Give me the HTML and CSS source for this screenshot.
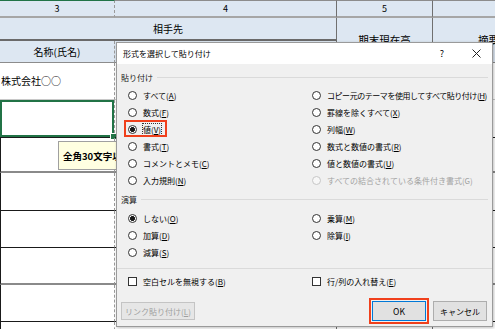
FILE: index.html
```html
<!DOCTYPE html>
<html lang="ja">
<head>
<meta charset="utf-8">
<title>形式を選択して貼り付け</title>
<link rel="stylesheet" href="styles.css">
</head>
<body>
<div class="sheet">
  <div class="c h1 hsel dash">3</div>
  <div class="c h1 dark">4</div>
  <div class="c h1 dark">5</div>
  <div class="c h1">6</div>

  <div class="c hd p-aite r2 dark">相手先</div>
  <div class="c hd p-kimatsu dark tall">期末現在高</div>
  <div class="c hd p-tekiyo tall">摘要</div>
  <div class="c hd p-name r3 dash">名称(氏名)</div>
  <div class="c hd p-addr r3 dark">所在地(住所)</div>

  <div class="c left dash">株式会社○○</div>
  <div class="c dark"></div>
  <div class="c dark"></div>
  <div class="c"></div>

  <div class="c sel dash bk"></div>
  <div class="c dark bk"></div>
  <div class="c dark bk"></div>
  <div class="c bk"></div>

  <div class="c dash gr lb"></div>
  <div class="c dark gr"></div>
  <div class="c dark gr"></div>
  <div class="c gr"></div>

  <div class="c dash bk lb"></div>
  <div class="c dark bk"></div>
  <div class="c dark bk"></div>
  <div class="c bk"></div>

  <div class="c dash bk lb"></div>
  <div class="c dark bk"></div>
  <div class="c dark bk"></div>
  <div class="c bk"></div>

  <div class="c dash gr lb"></div>
  <div class="c dark gr"></div>
  <div class="c dark gr"></div>
  <div class="c gr"></div>

  <div class="c dash bk lb"></div>
  <div class="c dark bk"></div>
  <div class="c dark bk"></div>
  <div class="c bk"></div>

  <div class="c dash lb"></div>
  <div class="c dark"></div>
  <div class="c dark"></div>
  <div class="c"></div>
</div>

<div class="tip"><span>全角30文字以内で入力してください</span></div>

<div class="dlg">
  <div class="title">
    <span class="ttext">形式を選択して貼り付け</span>
    <span class="help">?</span>
    <svg class="close" width="9" height="9" viewBox="0 0 9 9"><path d="M0.5 0.5 L8.5 8.5 M8.5 0.5 L0.5 8.5" stroke="#222" stroke-width="1" fill="none"/></svg>
  </div>
  <div class="body">
    <div class="grp">貼り付け</div>
    <div class="opts six">
      <div class="opt"><span class="rd"></span><span>すべて(<u>A</u>)</span></div>
      <div class="opt tight"><span class="rd"></span><span>コピー元のテーマを使用してすべて貼り付け(<u>H</u>)</span></div>
      <div class="opt"><span class="rd"></span><span>数式(<u>F</u>)</span></div>
      <div class="opt"><span class="rd"></span><span>罫線を除くすべて(<u>X</u>)</span></div>
      <div class="opt hl"><span class="rd on"></span><span class="focus">値(<u>V</u>)</span></div>
      <div class="opt"><span class="rd"></span><span>列幅(<u>W</u>)</span></div>
      <div class="opt"><span class="rd"></span><span>書式(<u>T</u>)</span></div>
      <div class="opt"><span class="rd"></span><span>数式と数値の書式(<u>R</u>)</span></div>
      <div class="opt"><span class="rd"></span><span>コメントとメモ(<u>C</u>)</span></div>
      <div class="opt"><span class="rd"></span><span>値と数値の書式(<u>U</u>)</span></div>
      <div class="opt"><span class="rd"></span><span>入力規則(<u>N</u>)</span></div>
      <div class="opt off"><span class="rd"></span><span>すべての結合されている条件付き書式(G)</span></div>
    </div>
    <div class="grp g2">演算</div>
    <div class="opts three">
      <div class="opt"><span class="rd on"></span><span>しない(<u>O</u>)</span></div>
      <div class="opt"><span class="rd"></span><span>乗算(<u>M</u>)</span></div>
      <div class="opt"><span class="rd"></span><span>加算(<u>D</u>)</span></div>
      <div class="opt"><span class="rd"></span><span>除算(<u>I</u>)</span></div>
      <div class="opt"><span class="rd"></span><span>減算(<u>S</u>)</span></div>
    </div>
    <div class="sep"></div>
    <div class="opts checks">
      <div class="opt"><span class="cb"></span><span>空白セルを無視する(<u>B</u>)</span></div>
      <div class="opt"><span class="cb"></span><span>行/列の入れ替え(<u>E</u>)</span></div>
    </div>
    <div class="btns">
      <span class="btn link">リンク貼り付け(<u>L</u>)</span>
      <span class="btn ok">OK</span>
      <span class="btn cancel">キャンセル</span>
    </div>
  </div>
</div>
</body>
</html>
```

FILE: styles.css
```css
html, body {
  margin: 0;
  padding: 0;
}
body {
  width: 495px;
  height: 329px;
  overflow: hidden;
  position: relative;
  background: #fff;
  font-family: "Noto Sans CJK JP", "Noto Sans", sans-serif;
}

/* ---------- spreadsheet ---------- */
.sheet {
  display: grid;
  grid-template-columns: 115px 222px 96px 130px;
  grid-template-rows: 18px 23px 22px 37px 38px 35px 38px 37px 37px 37px 30px;
}
.c {
  box-sizing: border-box;
  border-right: 1px solid #c8c8c8;
  border-bottom: 1px solid #c8c8c8;
  font-size: 10px;
  line-height: 1;
  display: flex;
  align-items: center;
  justify-content: center;
  color: #000;
  position: relative;
}
.c.dash { border-right: 1px dashed #9a9a9a; }
.c.dark { border-right: 1px solid #707070; }
.h1 {
  background: #dde7f2;
  border-top: 1px solid #8c8c8c;
  border-bottom: 2px solid #a6a6a6;
  font-size: 9px;
}
.h1.hsel { border-top-color: #217346; }
.hd { background: #dde7f2; }
.p-aite { grid-column: 1 / 3; grid-row: 2; }
.p-kimatsu { grid-column: 3; grid-row: 2 / 4; }
.p-tekiyo { grid-column: 4; grid-row: 2 / 4; justify-content: flex-start; padding-left: 45px; }
.p-name { grid-column: 1; grid-row: 3; }
.p-addr { grid-column: 2; grid-row: 3; }
.r2 { border-bottom: 2px solid #6a6a6a; }
.r3 { border-bottom: 1px solid #8c8c8c; }
.tall { border-bottom: 1px solid #8c8c8c; font-size: 10.5px; }
.left { justify-content: flex-start; padding-left: 1px; }
.sel { box-shadow: inset 0 0 0 2px #217346; }
.sel::after {
  content: "";
  position: absolute;
  right: -3px;
  bottom: -3px;
  width: 5px;
  height: 5px;
  background: #217346;
  border: 1px solid #fff;
}
.bk { border-bottom: 1px solid #1a1a1a; }
.gr { border-bottom: 2px solid #8a8a8a; }
.lb { border-left: 1px solid #1a1a1a; }

/* tooltip */
.tip {
  position: absolute;
  left: 58px;
  top: 141px;
  width: 60px;
  height: 29px;
  box-sizing: border-box;
  background: #ffffe1;
  border: 1px solid #a0a0a0;
  font-size: 9.5px;
  font-weight: bold;
  padding-left: 4px;
  display: flex;
  align-items: center;
  white-space: nowrap;
  overflow: hidden;
}

/* ---------- dialog ---------- */
.dlg {
  position: absolute;
  left: 116px;
  top: 42px;
  width: 377px;
  height: 285px;
  box-sizing: border-box;
  border: 1px solid #9a9a9a;
  background: #f0f0f0;
  box-shadow: 1px 1px 3px rgba(0,0,0,0.25);
  font-size: 8px;
  color: #000;
}
.title {
  height: 21px;
  background: #fff;
  display: flex;
  align-items: center;
  padding-left: 6px;
  padding-right: 11px;
}
.ttext { flex: 1; }
.help {
  width: 10px;
  text-align: center;
  font-size: 9px;
  margin-right: 25px;
}
.close { display: block; }

.body { padding: 0 4px; }
.grp {
  display: flex;
  align-items: center;
  height: 10px;
  margin-top: 8px;
  color: #222;
}
.grp::after {
  content: "";
  flex: 1;
  height: 1px;
  background: #dadada;
  margin-left: 4px;
}
.g2 { margin-top: 5px; }
.opts {
  display: grid;
  grid-template-columns: 184px 1fr;
  grid-auto-rows: 17px;
  padding-left: 7px;
  margin-top: 5px;
}
.opts.three { margin-top: 6px; }
.opts.checks { margin-top: 4px; }
.opt {
  display: flex;
  align-items: center;
  gap: 6px;
  white-space: nowrap;
  position: relative;
}
.tight { letter-spacing: -0.45px; }
.rd {
  width: 9px;
  height: 9px;
  box-sizing: border-box;
  border: 1px solid #333;
  border-radius: 50%;
  background: #fff;
  flex: none;
}
.rd.on { background: radial-gradient(circle, #1a1a1a 0 2.2px, #fff 2.6px); }
.cb {
  width: 9px;
  height: 9px;
  box-sizing: border-box;
  border: 1px solid #333;
  background: #fff;
  flex: none;
}
.off { color: #a3a3a3; }
.off .rd { border-color: #c6c6c6; background: #f7f7f7; }
.hl::after {
  content: "";
  position: absolute;
  left: -4px;
  top: -1px;
  width: 43px;
  height: 17px;
  box-sizing: border-box;
  border: 2px solid #f0401c;
}
.focus { outline: 1px dotted #333; outline-offset: 0; }

.sep {
  height: 1px;
  background: #dadada;
  margin: 7px -4px 0;
}
.btns {
  display: flex;
  align-items: center;
  margin-top: 11px;
  gap: 7px;
  padding-right: 1px;
}
.btn {
  box-sizing: border-box;
  display: flex;
  align-items: center;
  justify-content: center;
  height: 20px;
  width: 54px;
  background: #e1e1e1;
  border: 1px solid #adadad;
}
.link {
  width: 74px;
  height: 18px;
  color: #a0a0a0;
  background: #e6e6e6;
  border-color: #c4c4c4;
}
.ok {
  margin-left: auto;
  border-color: #0078d7;
  outline: 2px solid #f0401c;
  outline-offset: 1px;
  font-size: 8.5px;
}
```
